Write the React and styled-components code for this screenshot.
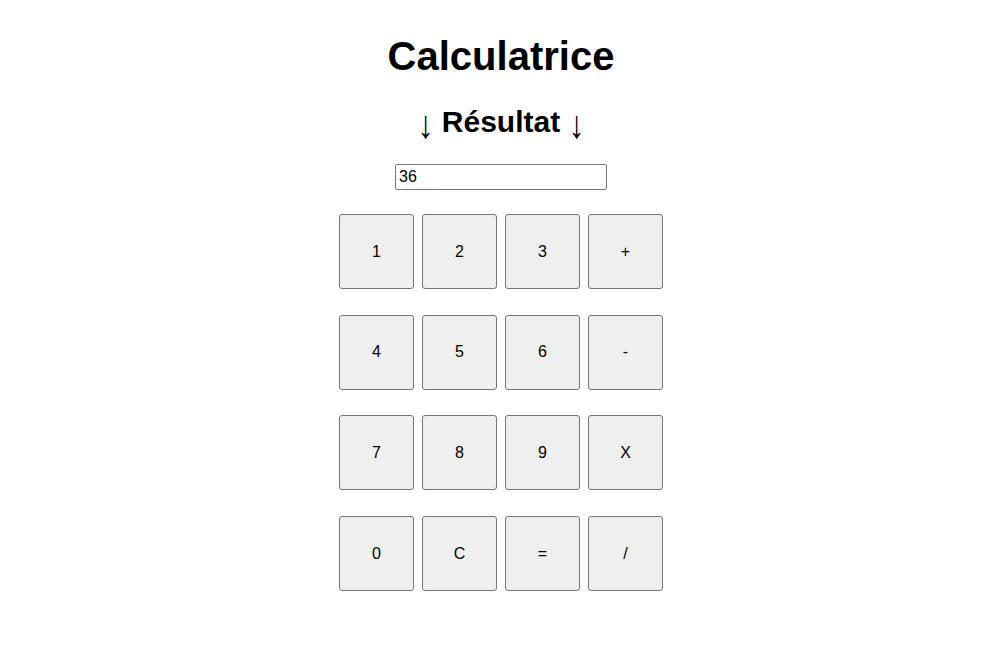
import React, { useState } from "react";
import styled, { createGlobalStyle } from "styled-components";

const Global = createGlobalStyle`
  html, body { margin: 0; padding: 0; background: #fff; }
  body { font-family: "Liberation Sans", Arial, sans-serif; color: #000; }
`;

const Page = styled.main`
  display: flex;
  flex-direction: column;
  align-items: center;
  padding: 33px 4px 0 0;
`;

const Title = styled.h1`
  margin: 0;
  font-size: 40px;
  line-height: 46px;
  font-weight: bold;
`;

const Subtitle = styled.h2`
  margin: 26px 0 0;
  font-size: 30px;
  line-height: 34px;
  font-weight: bold;
`;

const Arrow = styled.span`
  display: inline-block;
  font-weight: normal;
  transform: scale(1.05, 1.3) translateY(2px);
`;

const Display = styled.input`
  margin-top: 25px;
  width: 212px;
  height: 26px;
  box-sizing: border-box;
  border: 1px solid #767676;
  border-radius: 2px;
  padding: 1px 3px;
  font-family: "Liberation Sans", Arial, sans-serif;
  font-size: 16px;
  color: #000;
  background: #fff;
  outline: none;
`;

const Keypad = styled.div`
  margin-top: 24px;
  display: grid;
  grid-template-columns: repeat(4, 75px);
  grid-auto-rows: 75px;
  column-gap: 8px;
  row-gap: 25.7px;
`;

const Key = styled.button`
  box-sizing: border-box;
  border: 1px solid #767676;
  border-radius: 3px;
  background: #efefef;
  font-family: "Liberation Sans", Arial, sans-serif;
  font-size: 16px;
  color: #000;
  padding: 0;
  cursor: pointer;
  &:hover { background: #e5e5e5; }
`;

const keys = ["1", "2", "3", "+", "4", "5", "6", "-", "7", "8", "9", "X", "0", "C", "=", "/"];

export default function App() {
  const [value, setValue] = useState("36");
  return (
    <>
      <Global />
      <Page>
        <Title>Calculatrice</Title>
        <Subtitle>
          <Arrow>↓</Arrow> Résultat <Arrow>↓</Arrow>
        </Subtitle>
        <Display value={value} onChange={(e) => setValue(e.target.value)} />
        <Keypad>
          {keys.map((k) => (
            <Key key={k}>{k}</Key>
          ))}
        </Keypad>
      </Page>
    </>
  );
}
